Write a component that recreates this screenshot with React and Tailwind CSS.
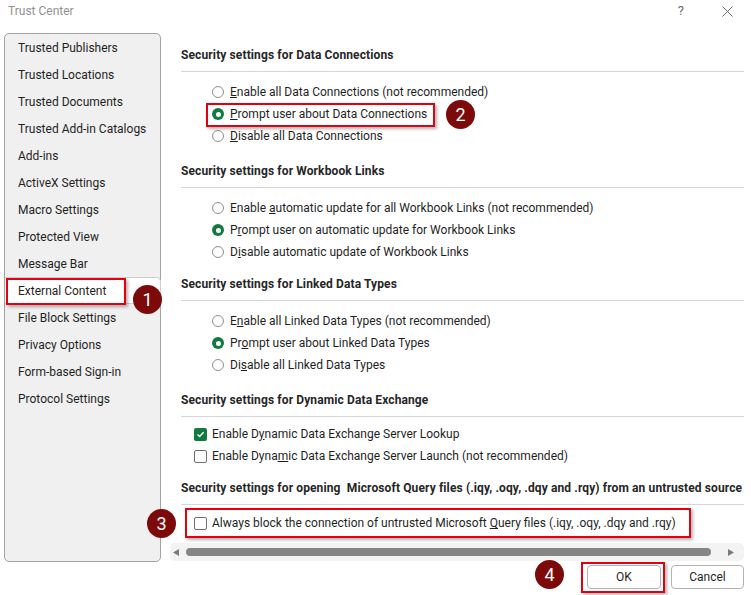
import React from 'react';

const sidebarItems = [
  'Trusted Publishers',
  'Trusted Locations',
  'Trusted Documents',
  'Trusted Add-in Catalogs',
  'Add-ins',
  'ActiveX Settings',
  'Macro Settings',
  'Protected View',
  'Message Bar',
  'External Content',
  'File Block Settings',
  'Privacy Options',
  'Form-based Sign-in',
  'Protocol Settings',
];

// numbered callout used for the tutorial annotations
const Badge = ({ n, className = '' }) => (
  <div
    className={`absolute w-[29px] h-[29px] rounded-full bg-[#7c0a0a] text-white text-[18px] leading-none flex items-center justify-center z-20 ${className}`}
  >
    {n}
  </div>
);

const RedBox = ({ className = '' }) => (
  <div
    className={`absolute border-2 border-[#e4000f] shadow-[2px_2px_3px_rgba(0,0,0,0.3)] pointer-events-none z-10 ${className}`}
  />
);

const Radio = ({ checked }) =>
  checked ? (
    <span className="w-[12px] h-[12px] rounded-full bg-[#127a40] flex items-center justify-center shrink-0">
      <span className="w-[5px] h-[5px] rounded-full bg-white" />
    </span>
  ) : (
    <span className="w-[12px] h-[12px] rounded-full border border-[#8f8f8f] bg-white shrink-0" />
  );

const Checkbox = ({ checked }) =>
  checked ? (
    <span className="w-[13px] h-[13px] rounded-[2px] bg-[#127a40] flex items-center justify-center shrink-0">
      <svg width="9" height="9" viewBox="0 0 9 9">
        <path d="M1.5 4.6 L3.6 6.6 L7.6 2.3" fill="none" stroke="white" strokeWidth="1.4" />
      </svg>
    </span>
  ) : (
    <span className="w-[13px] h-[13px] rounded-[2px] border border-[#6e6e6e] bg-white shrink-0" />
  );

const RadioRow = ({ checked, children }) => (
  <div className="h-[22px] flex items-center pl-[31px] gap-[6px]">
    <Radio checked={checked} />
    <span className="whitespace-nowrap">{children}</span>
  </div>
);

const CheckRow = ({ checked, children }) => (
  <div className="h-[22px] flex items-center pl-[13px] gap-[5px]">
    <Checkbox checked={checked} />
    <span className="whitespace-nowrap">{children}</span>
  </div>
);

const Heading = ({ children, className = '' }) => (
  <div className={className}>
    <div className="h-[20px] leading-[20px] font-bold tracking-[0.12px] text-[#262626] whitespace-pre">{children}</div>
    <div className="mt-[6px] h-px bg-[#d6d6d6]" />
  </div>
);

export default function App() {
  return (
    <div className="w-[751px] h-[595px] bg-white overflow-hidden text-[12px] text-[#1f1f1f] font-['Roboto','Segoe_UI',sans-serif]">
      {/* title bar */}
      <div className="h-[33px] flex items-start justify-between">
        <span className="ml-[8px] mt-[3px] leading-[16px] text-[#939393]">Trust Center</span>
        <div className="flex items-center gap-[38px] mr-[18px] mt-[5px] text-[#6b6b6b]">
          <span className="text-[13px] leading-[12px]">?</span>
          <svg width="11" height="11" viewBox="0 0 11 11">
            <path d="M0.5 0.5 L10.5 10.5 M10.5 0.5 L0.5 10.5" stroke="#6b6b6b" strokeWidth="1" />
          </svg>
        </div>
      </div>

      <div className="flex h-[529px]">
        {/* sidebar */}
        <div className="ml-[4px] w-[157px] h-full border border-[#a3a3a3] rounded-[5px] bg-[#f0f0f0]">
          {sidebarItems.map((item) =>
            item === 'External Content' ? (
              <div
                key={item}
                className="relative h-[27px] flex items-center pl-[13px] bg-white border border-l-0 border-[#cfcfcf] rounded-r-[5px] -mr-px"
              >
                {item}
                <RedBox className="left-[1px] top-0 w-[120px] h-[27px]" />
                <Badge n="1" className="left-[128px] top-[7px]" />
              </div>
            ) : (
              <div key={item} className="h-[27px] flex items-center pl-[13px]">
                {item}
              </div>
            )
          )}
        </div>

        {/* settings pane */}
        <div className="flex-1 pl-[20px] pr-[7px] pt-[12px]">
          <Heading>Security settings for Data Connections</Heading>
          <div className="mt-[9px]">
            <RadioRow>
              <u>E</u>nable all Data Connections (not recommended)
            </RadioRow>
            <div className="relative">
              <RadioRow checked>
                <u>P</u>rompt user about Data Connections
              </RadioRow>
              <RedBox className="left-[25px] top-0 w-[229px] h-[24px]" />
              <Badge n="2" className="left-[265px] top-[-3px]" />
            </div>
            <RadioRow>
              <u>D</u>isable all Data Connections
            </RadioRow>
          </div>

          <Heading className="mt-[14px]">Security settings for Workbook Links</Heading>
          <div className="mt-[9px]">
            <RadioRow>
              Enable <u>a</u>utomatic update for all Workbook Links (not recommended)
            </RadioRow>
            <RadioRow checked>
              P<u>r</u>ompt user on automatic update for Workbook Links
            </RadioRow>
            <RadioRow>
              D<u>i</u>sable automatic update of Workbook Links
            </RadioRow>
          </div>

          <Heading className="mt-[11px]">Security settings for Linked Data Types</Heading>
          <div className="mt-[9px]">
            <RadioRow>
              E<u>n</u>able all Linked Data Types (not recommended)
            </RadioRow>
            <RadioRow checked>
              Pr<u>o</u>mpt user about Linked Data Types
            </RadioRow>
            <RadioRow>
              Di<u>s</u>able all Linked Data Types
            </RadioRow>
          </div>

          <Heading className="mt-[14px]">Security settings for Dynamic Data Exchange</Heading>
          <div className="mt-[6px]">
            <CheckRow checked>
              Enable D<u>y</u>namic Data Exchange Server Lookup
            </CheckRow>
            <CheckRow>
              Enable Dyna<u>m</u>ic Data Exchange Server Launch (not recommended)
            </CheckRow>
          </div>

          <Heading className="mt-[11px]">
            {'Security settings for opening  Microsoft Query files (.iqy, .oqy, .dqy and .rqy) from an untrusted source'}
          </Heading>
          <div className="relative mt-[3px] h-[30px] flex items-center pl-[13px] gap-[5px]">
            <Checkbox />
            <span className="whitespace-nowrap">
              Always block the connection of untrusted Microsoft <u>Q</u>uery files (.iqy, .oqy, .dqy and .rqy)
            </span>
            <RedBox className="left-[4px] top-0 w-[506px] h-[30px]" />
            <Badge n="3" className="left-[-34px] top-[1px]" />
          </div>

          {/* horizontal scrollbar */}
          <div className="mt-[5px] -ml-[11px] h-[18px] rounded-[5px] bg-[#f3f3f3] flex items-center px-[3px] gap-[4px]">
            <svg width="6" height="7" viewBox="0 0 6 7">
              <path d="M6 0 L0 3.5 L6 7 Z" fill="#7a7a7a" />
            </svg>
            <div className="ml-[3px] w-[525px] h-[8px] rounded-full bg-[#858585]" />
            <div className="flex-1" />
            <svg width="6" height="7" viewBox="0 0 6 7">
              <path d="M0 0 L6 3.5 L0 7 Z" fill="#7a7a7a" />
            </svg>
            <div className="w-[3px]" />
          </div>
        </div>
      </div>

      {/* dialog buttons */}
      <div className="mt-[3px] flex justify-end gap-[10px] pr-[7px]">
        <div className="relative">
          <button className="w-[74px] h-[24px] rounded-[4px] border border-[#b3b3b3] bg-white text-[12px]">OK</button>
          <RedBox className="left-[-6px] top-[-3px] w-[84px] h-[31px]" />
          <Badge n="4" className="left-[-52px] top-[-5px]" />
        </div>
        <button className="w-[73px] h-[24px] rounded-[4px] border border-[#b3b3b3] bg-white text-[12px]">Cancel</button>
      </div>
    </div>
  );
}
